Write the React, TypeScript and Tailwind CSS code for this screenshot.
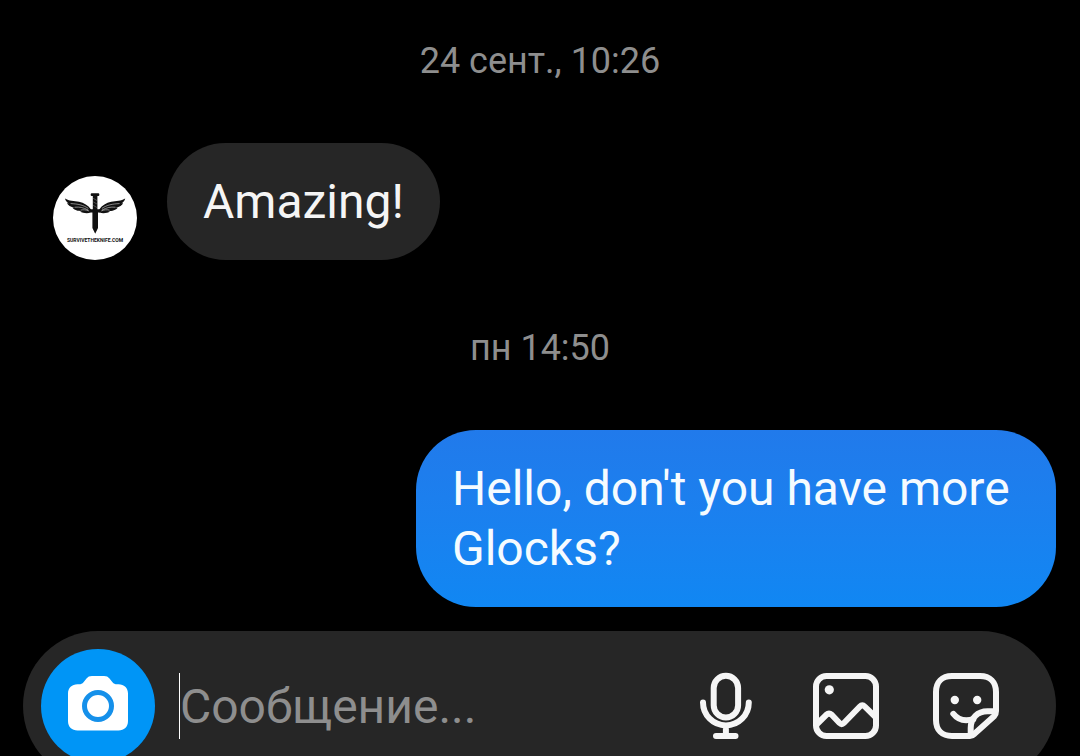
import type { ReactNode } from "react";

function SenderLogo() {
  return (
    <svg viewBox="0 0 84 84" className="size-full" role="img" aria-label="survivetheknife.com">
      <g fill="#111">
        <rect x="37.7" y="17.3" width="8.6" height="2.8" rx="1" />
        <rect x="39.8" y="19" width="4.6" height="15" />
        <path d="M36.500 33.200h11.400l-1 3.300h-1.900V52l-2.800 5.800-2.800-5.800V36.500h-1.900z" />
        <path d="M12 22.500c4 2.600 9 2.200 14 3.300 5 1.100 9 3.400 12 7.700v2.700c-3 1.600-8 1-11-.8l2-.2c-4 0-8-1.300-9.500-3.400l2.200.2c-4-.9-7-3-7.700-5l1.800.4c-2-1.200-3.400-2.900-3.800-4.900z" />
        <path d="M72.200 22.500c-4 2.600-9 2.200-14 3.300-5 1.100-9 3.400-12 7.700v2.700c3 1.600 8 1 11-.8l-2-.2c4 0 8-1.300 9.500-3.400l-2.200.2c4-.9 7-3 7.700-5l-1.800.4c2-1.200 3.400-2.900 3.800-4.900z" />
      </g>
      <g fill="none" stroke="#fff" strokeWidth="0.5" strokeLinecap="round">
        <path d="M18 27.600c7 .4 12 1.200 17 4.600M22 31.200c5-.4 8 .2 13 2.700M28 34c3-.5 5-.2 7.500.8" />
        <path d="M66.200 27.600c-7 .4-12 1.200-17 4.600M62.200 31.200c-5-.4-8 .2-13 2.700M56.200 34c-3-.5-5-.2-7.500.8" />
        <path d="M40.500 22.500l3.400 2M40.500 26l3.400 2M40.500 29.500l3.400 2" stroke="#888" />
      </g>
      <text x="42" y="66" textAnchor="middle" fill="#111" className="font-['Roboto',sans-serif] text-[5px] font-bold">
        SURVIVETHEKNIFE.COM
      </text>
    </svg>
  );
}

function CameraIcon() {
  return (
    <svg viewBox="0 0 60 60" className="size-[60px]" aria-hidden="true">
      <path
        fill="#fff"
        d="M24 0h12c2.600 0 4 .8 5.500 2.600l3 3.600C45.700 7.600 47 8.300 49 8.300h1.500C56 8.300 60 12 60 17.500V45c0 6-4 9.500-9.500 9.500h-41C4 54.500 0 51 0 45V17.500C0 12 4 8.300 9.500 8.300H11c2 0 3.300-.7 4.500-2.100l3-3.600C20 .8 21.400 0 24 0z"
      />
      <circle cx="30" cy="30" r="13.500" fill="none" stroke="#1590ea" strokeWidth="5" />
    </svg>
  );
}

function LineIcon({ children }: { children: ReactNode }) {
  return (
    <svg
      viewBox="0 0 72 72"
      className="size-[72px]"
      fill="none"
      stroke="#f5f5f5"
      strokeWidth="6"
      strokeLinecap="round"
      strokeLinejoin="round"
      aria-hidden="true"
    >
      {children}
    </svg>
  );
}

function MicIcon() {
  return (
    <LineIcon>
      <rect x="23.700" y="5.800" width="24.400" height="41.600" rx="12.200" />
      <path d="M13 32.500a22.900 22.900 0 0 0 45.800 0M35.900 57v9M26 66h19.500" />
    </LineIcon>
  );
}

function PhotoIcon() {
  return (
    <LineIcon>
      <rect x="6" y="6" width="60" height="60" rx="10.500" />
      <path d="M6.500 54.500l9.800-9.700q2.700-2.500 5.400 0l7.800 8.200q2.200 2.200 4.400 0l16-16.500q2.400-2.400 4.800 0L65.500 47" />
      <circle cx="19.300" cy="19.800" r="4.600" fill="#f5f5f5" stroke="none" />
    </LineIcon>
  );
}

function StickerIcon() {
  return (
    <LineIcon>
      <path d="M66 41V22C66 12 60 6 50 6H22C12 6 6 12 6 22v28c0 10 6 16 16 16h18c2 0 3-.7 4.200-1.900L64.300 46c1.200-1.200 1.700-2.700 1.700-5z" />
      <path d="M65 41.200h-7.500c-10 0-16.800 6.800-16.800 16.800v7" />
      <path d="M23.300 43.800c4.700 6.200 11.200 7.800 20 5.400" />
      <g fill="#f5f5f5" stroke="none">
        <circle cx="24.800" cy="30" r="4.200" />
        <circle cx="47.200" cy="30" r="4.200" />
      </g>
    </LineIcon>
  );
}

function Timestamp({ children }: { children: ReactNode }) {
  return <p className="text-center text-4xl leading-[48px] text-[#8e8e8e]">{children}</p>;
}

const bubble = "rounded-[60px] px-9 pt-[29px] pb-7 text-5xl leading-[60px]";

const actions = [
  { label: "Голосовое сообщение", icon: <MicIcon /> },
  { label: "Галерея", icon: <PhotoIcon /> },
  { label: "Стикеры", icon: <StickerIcon /> },
];

export default function App() {
  return (
    <main className="flex h-screen flex-col overflow-hidden bg-black pt-[37px] font-['Roboto','Noto_Sans',sans-serif]">
      <Timestamp>24 сент., 10:26</Timestamp>

      <div className="mt-[58px] flex items-end gap-[30px] pl-[53px]">
        <div className="size-[84px] shrink-0 overflow-hidden rounded-full bg-white">
          <SenderLogo />
        </div>
        <p className={`${bubble} bg-[#262626] text-[#f5f5f5]`}>Amazing!</p>
      </div>

      <div className="mt-16">
        <Timestamp>пн 14:50</Timestamp>
      </div>

      <div className="mt-[58px] flex justify-end pr-6">
        <p className={`${bubble} max-w-[640px] bg-linear-to-b from-[#217aeb] to-[#1087f3] text-[#f5fbff]`}>
          Hello, don't you have more Glocks?
        </p>
      </div>

      <form
        className="mt-6 mr-6 ml-[23px] flex shrink-0 items-center rounded-full bg-[#262626] py-[18px] pr-[54px] pl-[18px]"
        onSubmit={(event) => event.preventDefault()}
      >
        <button
          type="button"
          aria-label="Камера"
          className="flex size-[114px] shrink-0 items-center justify-center rounded-full bg-[#0095f6]"
        >
          <CameraIcon />
        </button>
        <span className="ml-6 h-[66px] w-px shrink-0 bg-white" aria-hidden="true" />
        <input
          type="text"
          aria-label="Сообщение"
          placeholder="Сообщение..."
          className="h-[66px] min-w-0 flex-1 bg-transparent text-5xl text-[#f5f5f5] outline-none placeholder:text-[#8e8e8e]"
        />
        <div className="flex shrink-0 gap-12">
          {actions.map(({ label, icon }) => (
            <button key={label} type="button" aria-label={label}>
              {icon}
            </button>
          ))}
        </div>
      </form>
    </main>
  );
}
